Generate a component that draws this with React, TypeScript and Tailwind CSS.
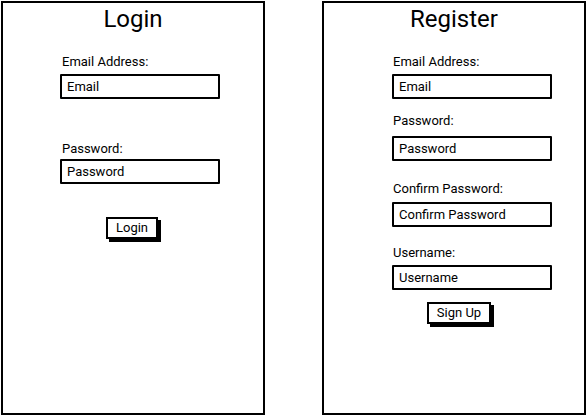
import React from "react";

const font = { fontFamily: "Roboto, 'Open Sans', sans-serif" };

function Field({ label, placeholder, labelMt, inputMt, labelPl }: { label: string; placeholder: string; labelMt: string; inputMt: string; labelPl: string }) {
  return (
    <>
      <div className={`${labelMt} ${labelPl} h-[16px] text-[13px] leading-[16px] text-black`}>{label}</div>
      <div className={`${inputMt} flex h-[25px] w-[160px] items-center border-2 border-black pl-[5px] text-[13px] text-black rounded-[1px]`}>
        {placeholder}
      </div>
    </>
  );
}

export default function App() {
  return (
    <div className="flex h-[416px] w-[588px] gap-[57px] bg-white pl-[1px] pt-[1px]" style={font}>
      <div className="flex h-[414px] w-[264px] flex-col border-2 border-black">
        <div className="h-[32px] text-center text-[24px] leading-[32px] text-black">Login</div>
        <div className="flex flex-col pl-[57px]">
          <Field label="Email Address:" placeholder="Email" labelMt="mt-[19px]" inputMt="mt-[4px]" labelPl="pl-[2px]" />
          <Field label="Password:" placeholder="Password" labelMt="mt-[42px]" inputMt="mt-[2px]" labelPl="pl-[2px]" />
          <div className="ml-[46px] mt-[33px] flex h-[22px] w-[52px] items-center justify-center border-2 border-black text-[13px] text-black shadow-[3px_3px_0_#000]">
            Login
          </div>
        </div>
      </div>
      <div className="flex h-[414px] w-[264px] flex-col border-2 border-black">
        <div className="h-[32px] text-center text-[24px] leading-[32px] text-black">Register</div>
        <div className="flex flex-col pl-[68px]">
          <Field label="Email Address:" placeholder="Email" labelMt="mt-[19px]" inputMt="mt-[4px]" labelPl="pl-[1px]" />
          <Field label="Password:" placeholder="Password" labelMt="mt-[14px]" inputMt="mt-[7px]" labelPl="pl-[1px]" />
          <Field label="Confirm Password:" placeholder="Confirm Password" labelMt="mt-[20px]" inputMt="mt-[5px]" labelPl="pl-[1px]" />
          <Field label="Username:" placeholder="Username" labelMt="mt-[18px]" inputMt="mt-[4px]" labelPl="pl-[1px]" />
          <div className="ml-[35px] mt-[12px] flex h-[22px] w-[64px] items-center justify-center border-2 border-black text-[13px] text-black shadow-[3px_3px_0_#000]">
            Sign Up
          </div>
        </div>
      </div>
    </div>
  );
}
